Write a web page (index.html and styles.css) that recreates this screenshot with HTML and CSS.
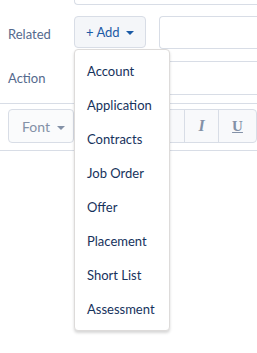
FILE: index.html
```html
<!DOCTYPE html>
<html lang="en">
	<head>
		<meta charset="UTF-8">
		<meta name="viewport" content="width=device-width, initial-scale=1.0">
		<title>Task</title>
		<link rel="stylesheet" href="styles.css">
	</head>

	<body>
		<main class="task-form">
			<div class="row row-top">
				<span class="label"></span>
				<div class="input"></div>
			</div>

			<div class="row row-related">
				<span class="label">Related</span>
				<div class="related-controls">
					<div class="add-wrap">
						<button class="add-btn">+ Add <span class="caret"></span></button>

						<ul class="menu">
							<li>Account</li>
							<li>Application</li>
							<li>Contracts</li>
							<li>Job Order</li>
							<li>Offer</li>
							<li>Placement</li>
							<li>Short List</li>
							<li>Assessment</li>
						</ul>
					</div>
					<div class="input input-related"></div>
				</div>
			</div>

			<div class="row row-action">
				<span class="label">Action</span>
				<div class="input input-action"></div>
			</div>
		</main>

		<div class="toolbar">
			<button class="font-btn">Font <span class="caret caret-grey"></span></button>
			<div class="btn-group">
				<span class="cell"></span>
				<span class="cell"></span>
				<span class="cell"></span>
				<span class="cell cell-i">I</span>
				<span class="cell cell-u">U</span>
			</div>
		</div>

		<div class="editor"></div>
	</body>
</html>
```

FILE: styles.css
```css
html, body {
	height: 100%;
}

body {
	margin: 0;
	display: flex;
	flex-direction: column;
	background: #fff;
	font-family: Lato, "Liberation Sans", sans-serif;
	font-size: 13px;
	color: #16325c;
}

.task-form {
	padding: 0 0 8px 8px;
	position: relative;
	z-index: 2;
}

.editor {
	flex: 1;
}

.row {
	display: grid;
	grid-template-columns: 66px 1fr;
	align-items: center;
}

.label {
	color: #54698d;
}

.input {
	box-sizing: border-box;
	border: 1px solid #d8dde6;
	border-right: 0;
	border-radius: 4px 0 0 4px;
}

.row-top {
	margin-top: -29px;
}

.row-top .input {
	height: 34px;
}

.row-related {
	margin-top: 11px;
}

.row-related .label {
	padding-top: 2px;
}

.related-controls {
	display: flex;
	align-items: flex-start;
}

.add-wrap {
	position: relative;
	z-index: 2;
}

.add-btn {
	box-sizing: border-box;
	width: 72px;
	height: 32px;
	border: 1px solid #d8dde6;
	border-radius: 4px;
	background: #f4f6f9;
	color: #1a5aa6;
	font-family: inherit;
	font-size: 13px;
	padding: 0 0 1px 0;
}

.caret {
	display: inline-block;
	width: 0;
	height: 0;
	margin-left: 3px;
	vertical-align: middle;
	border-left: 4px solid transparent;
	border-right: 4px solid transparent;
	border-top: 4px solid #1a5aa6;
}

.caret-grey {
	border-top-color: #8391a7;
}

.input-related {
	flex: 1;
	height: 33px;
	margin-left: 13px;
}

.menu {
	position: absolute;
	top: 33px;
	left: 0;
	box-sizing: border-box;
	width: 96px;
	margin: 0;
	padding: 4px 0;
	list-style: none;
	background: #fff;
	border: 1px solid #dddbda;
	border-radius: 4px;
	box-shadow: 0 2px 3px rgba(0, 0, 0, 0.16);
}

.menu li {
	height: 34px;
	line-height: 34px;
	padding-left: 12px;
	white-space: nowrap;
}

.row-action {
	margin-top: 12px;
}

.input-action {
	height: 34px;
}

.toolbar {
	display: flex;
	gap: 7px;
	align-items: flex-start;
	overflow: hidden;
	flex: none;
	border-top: 1px solid #d8dde6;
	border-bottom: 1px solid #d8dde6;
	padding: 5px 0 7px 8px;
}

.font-btn {
	box-sizing: border-box;
	width: 66px;
	height: 34px;
	flex: none;
	border: 1px solid #d8dde6;
	border-radius: 4px;
	background: #fafbfc;
	color: #8391a7;
	font-family: inherit;
	font-size: 14px;
	text-align: left;
	padding: 0 0 0 13px;
}

.btn-group {
	display: flex;
	flex: none;
	border: 1px solid #d8dde6;
	border-radius: 4px;
	background: #f8f9fb;
}

.cell {
	box-sizing: border-box;
	width: 34px;
	height: 32px;
	border-left: 1px solid #d8dde6;
	display: flex;
	align-items: center;
	justify-content: center;
	font-family: "Liberation Serif", serif;
	font-size: 16px;
	color: #8391a7;
}

.cell:first-child {
	border-left: 0;
}

.cell-i {
	font-style: italic;
	font-weight: bold;
}

.cell-u {
	width: 38px;
	text-decoration: underline;
	font-weight: bold;
	font-size: 15px;
}
```
